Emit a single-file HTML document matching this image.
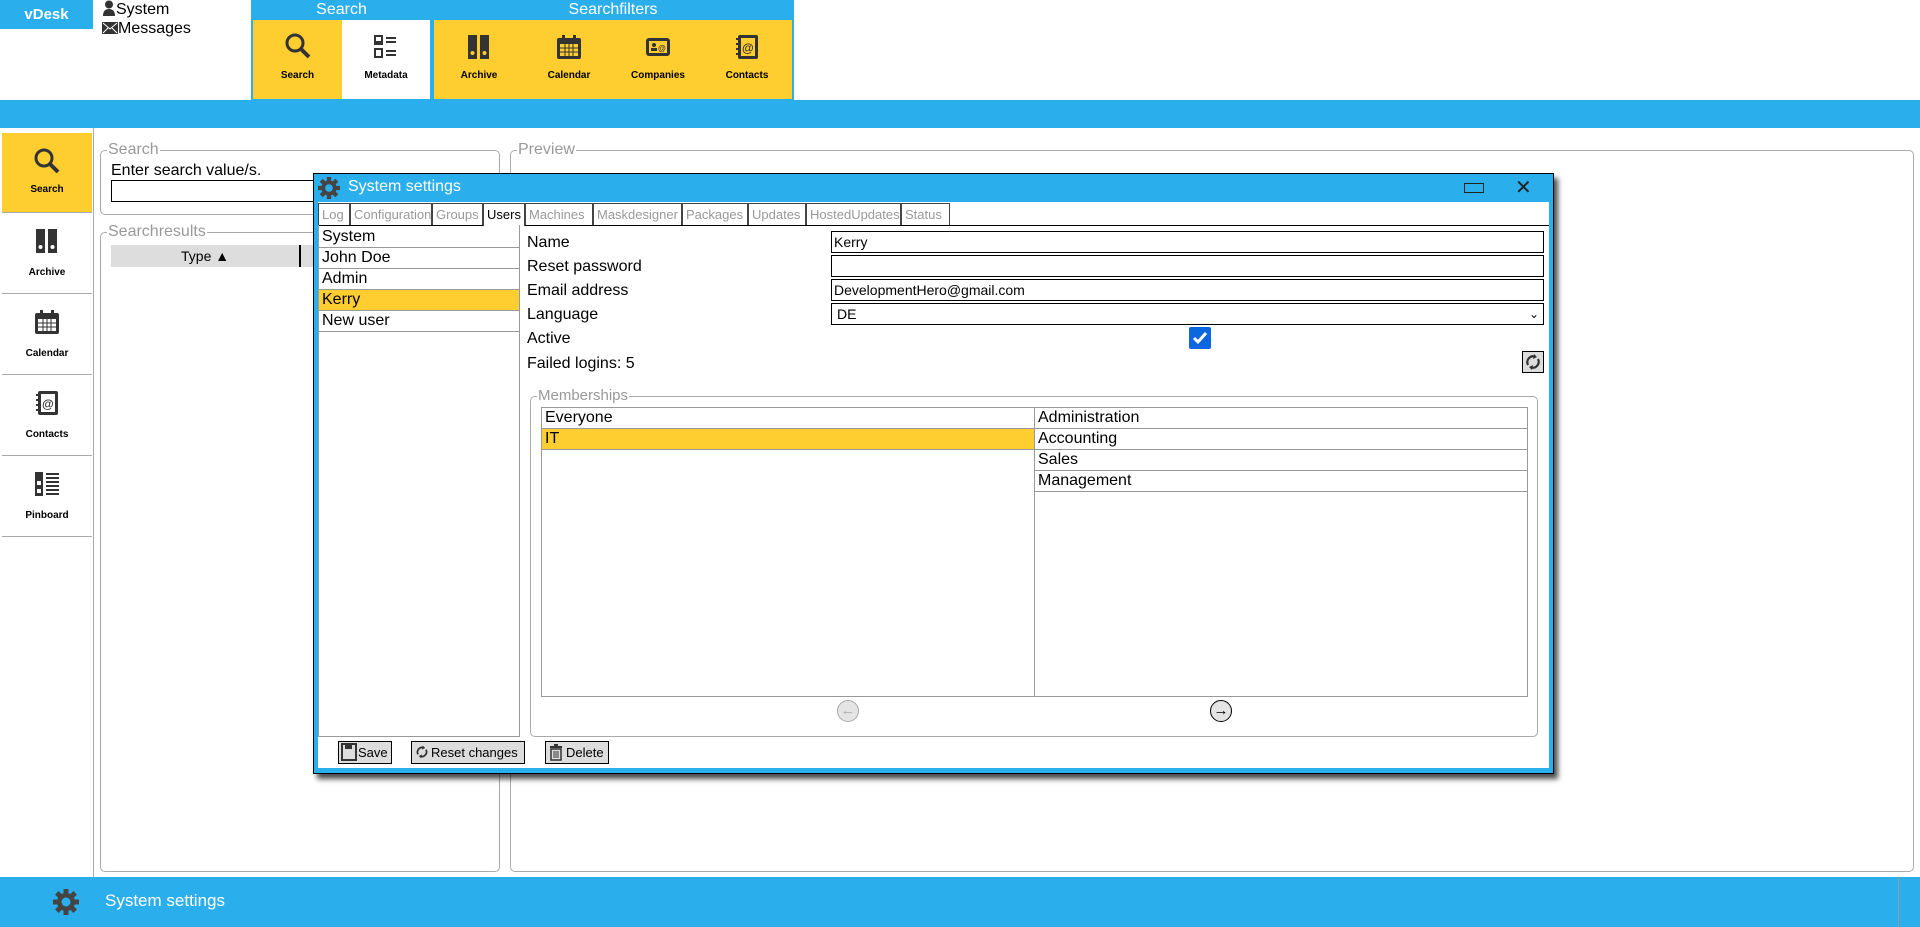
<!DOCTYPE html>
<html><head><meta charset="utf-8"><style>
*{box-sizing:border-box;margin:0;padding:0}
body{width:1920px;height:927px;overflow:hidden;background:#fff;font-family:"Liberation Sans",sans-serif;position:relative;color:#000}
.a{position:absolute}
.blue{background:#2bafec}
.yel{background:#fecd30}
.tile{position:absolute;text-align:center;font-size:10px;font-weight:bold}
.tile svg{display:block;margin:0 auto}
.fs{position:absolute;border:1px solid #aaa;border-radius:5px}
.lg{position:absolute;top:-10px;left:6px;background:#fff;color:#999;font-size:16px;padding:0 1px;line-height:18px}
.side{position:absolute;left:2px;width:90px;height:80px;text-align:center;font-size:10px;font-weight:bold;border-bottom:1px solid #aaa}
.tab{position:absolute;top:203px;height:22px;border:1px solid #444;border-bottom:none;font-size:13px;color:#999;line-height:21px;padding-left:3px}
.ul div{height:21px;border-bottom:1px solid #999;font-size:16px;line-height:20px;padding-left:3px}
.lbl{position:absolute;left:527px;font-size:16px}
.inp{position:absolute;left:831px;width:713px;height:22px;border:1px solid #000;font-size:14px;line-height:20px;padding-left:2px}
.btn{position:absolute;top:741px;height:23px;border:1px solid #000;background:#ddd;font-size:13px;line-height:21px}
</style></head><body>
<!-- top -->
<div class="a blue" style="left:0;top:0;width:93px;height:29px;color:#fff;font-weight:bold;font-size:15px;text-align:center;line-height:29px">vDesk</div>
<div class="a" style="left:102px;top:0;font-size:16px;line-height:19px">
<div><svg width="14" height="16" viewBox="0 0 14 16" style="vertical-align:-2px"><circle cx="7" cy="4.5" r="4" fill="#333"/><path d="M1 16 Q1 9 7 9 Q13 9 13 16Z" fill="#333"/></svg>System</div>
<div><svg width="16" height="12" viewBox="0 0 16 12" style="vertical-align:-1px"><rect width="16" height="12" fill="#333"/><path d="M1 1 L8 7 L15 1 M1 11 L6 6 M15 11 L10 6" stroke="#fff" fill="none"/></svg>Messages</div></div>
<div class="a blue" style="left:251px;top:0;width:181px;height:100px"></div>
<div class="a" style="left:251px;top:0;width:181px;height:20px;color:#fff;font-size:16px;text-align:center;line-height:19px">Search</div>
<div class="a yel" style="left:253px;top:20px;width:89px;height:79px"></div>
<div class="a" style="left:342px;top:20px;width:88px;height:79px;background:#fff"></div>
<div class="a blue" style="left:432px;top:0;width:362px;height:100px"></div>
<div class="a" style="left:432px;top:0;width:362px;height:20px;color:#fff;font-size:16px;text-align:center;line-height:19px">Searchfilters</div>
<div class="a yel" style="left:434px;top:20px;width:358px;height:79px"></div>
<div class="tile" style="left:253px;top:32px;width:89px"><svg width="28" height="28" viewBox="0 0 28 28"><circle cx="11" cy="11" r="8" stroke="#333" stroke-width="3" fill="none"/><path d="M17 17 L25 25" stroke="#333" stroke-width="4"/></svg><div style="margin-top:10px">Search</div></div>
<div class="tile" style="left:342px;top:34px;width:88px"><svg width="26" height="26" viewBox="0 0 26 26"><rect x="1" y="1" width="9" height="10" fill="#333"/><rect x="1" y="14" width="9" height="10" fill="#333"/><rect x="3" y="3" width="5" height="4" fill="#fff"/><rect x="3" y="16" width="5" height="6" fill="#fff"/><path d="M13 4h10M13 8h10M13 17h10M13 21h10" stroke="#333" stroke-width="2"/></svg><div style="margin-top:10px">Metadata</div></div>
<div class="tile" style="left:434px;top:34px;width:90px"><svg width="24" height="26" viewBox="0 0 24 26"><rect x="1" y="1" width="9" height="24" fill="#333"/><rect x="13" y="1" width="9" height="24" fill="#333"/><circle cx="5.5" cy="19" r="2" fill="#fecd30"/><circle cx="17.5" cy="19" r="2" fill="#fecd30"/></svg><div style="margin-top:10px">Archive</div></div>
<div class="tile" style="left:524px;top:34px;width:90px"><svg width="26" height="26" viewBox="0 0 26 26"><rect x="1" y="4" width="24" height="21" rx="2" fill="#333"/><rect x="4" y="10" width="18" height="12" fill="#fecd30"/><path d="M4 14h18M4 18h18M9 10v12M13 10v12M17 10v12" stroke="#333"/><rect x="6" y="1" width="3" height="6" fill="#333"/><rect x="17" y="1" width="3" height="6" fill="#333"/></svg><div style="margin-top:10px">Calendar</div></div>
<div class="tile" style="left:614px;top:34px;width:88px"><svg width="26" height="26" viewBox="0 0 26 26"><rect x="1" y="4" width="24" height="18" rx="3" fill="#333"/><rect x="4" y="7" width="18" height="12" fill="#fecd30"/><circle cx="9" cy="11" r="2" fill="#333"/><rect x="6" y="14" width="6" height="3" fill="#333"/><text x="13" y="17" font-size="8" font-family="Liberation Sans" fill="#333" font-weight="bold">@</text></svg><div style="margin-top:10px">Companies</div></div>
<div class="tile" style="left:702px;top:34px;width:90px"><svg width="26" height="26" viewBox="0 0 26 26"><rect x="4" y="1" width="20" height="24" rx="2" fill="#333"/><rect x="7" y="4" width="14" height="18" fill="#fecd30"/><text x="8" y="18" font-size="12" font-family="Liberation Sans" fill="#333" font-weight="bold">@</text><path d="M2 5h4M2 10h4M2 15h4M2 20h4" stroke="#333" stroke-width="2"/></svg><div style="margin-top:10px">Contacts</div></div>
<div class="a blue" style="left:0;top:100px;width:1920px;height:28px"></div>
<!-- sidebar -->
<div class="a" style="left:93px;top:128px;width:1px;height:749px;background:#aaa"></div>
<div class="side yel" style="top:133px;height:80px;padding-top:14px"><svg width="28" height="28" viewBox="0 0 28 28"><circle cx="11" cy="11" r="8" stroke="#333" stroke-width="3" fill="none"/><path d="M17 17 L25 25" stroke="#333" stroke-width="4"/></svg><div style="margin-top:6px">Search</div></div>
<div class="side" style="top:214px;padding-top:14px"><svg width="24" height="26" viewBox="0 0 24 26"><rect x="1" y="1" width="9" height="24" fill="#333"/><rect x="13" y="1" width="9" height="24" fill="#333"/><circle cx="5.5" cy="19" r="2" fill="#fff"/><circle cx="17.5" cy="19" r="2" fill="#fff"/></svg><div style="margin-top:10px">Archive</div></div>
<div class="side" style="top:295px;padding-top:14px"><svg width="26" height="26" viewBox="0 0 26 26"><rect x="1" y="4" width="24" height="21" rx="2" fill="#333"/><rect x="4" y="10" width="18" height="12" fill="#fff"/><path d="M4 14h18M4 18h18M9 10v12M13 10v12M17 10v12" stroke="#333"/><rect x="6" y="1" width="3" height="6" fill="#333"/><rect x="17" y="1" width="3" height="6" fill="#333"/></svg><div style="margin-top:10px">Calendar</div></div>
<div class="side" style="top:376px;padding-top:14px"><svg width="26" height="26" viewBox="0 0 26 26"><rect x="4" y="1" width="20" height="24" rx="2" fill="#333"/><rect x="7" y="4" width="14" height="18" fill="#fff"/><text x="8" y="18" font-size="12" font-family="Liberation Sans" fill="#333" font-weight="bold">@</text><path d="M2 5h4M2 10h4M2 15h4M2 20h4" stroke="#333" stroke-width="2"/></svg><div style="margin-top:10px">Contacts</div></div>
<div class="side" style="top:457px;padding-top:14px"><svg width="26" height="26" viewBox="0 0 26 26"><rect x="1" y="1" width="8" height="24" fill="#333"/><rect x="3" y="10" width="4" height="4" fill="#fff"/><rect x="3" y="18" width="4" height="4" fill="#fff"/><path d="M12 3h13M12 7h13M12 11h13M12 15h13M12 19h13M12 23h13" stroke="#333" stroke-width="2"/></svg><div style="margin-top:10px">Pinboard</div></div>
<!-- fieldsets -->
<div class="fs" style="left:100px;top:150px;width:400px;height:65px"><div class="lg">Search</div>
<div class="a" style="left:10px;top:11px;font-size:16px">Enter search value/s.</div>
<div class="a" style="left:10px;top:29px;width:400px;height:22px;border:1px solid #000"></div></div>
<div class="fs" style="left:100px;top:232px;width:400px;height:640px"><div class="lg">Searchresults</div>
<div class="a" style="left:10px;top:12px;width:400px;height:22px;background:#ddd;font-size:14px;line-height:22px;padding-left:70px">Type ▲</div>
<div class="a" style="left:198px;top:12px;width:2px;height:22px;background:#000"></div></div>
<div class="fs" style="left:510px;top:150px;width:1404px;height:722px"><div class="lg">Preview</div></div>
<!-- footer -->
<div class="a blue" style="left:0;top:877px;width:1920px;height:50px"></div>
<div class="a" style="left:1898px;top:877px;width:1px;height:50px;background:#999"></div>
<svg class="a" style="left:53px;top:889px" width="26" height="26" viewBox="0 0 26 26"><g fill="#444"><circle cx="13" cy="13" r="9"/><rect x="10.5" y="0" width="5" height="26"/><rect x="0" y="10.5" width="26" height="5"/><rect x="10.5" y="0" width="5" height="26" transform="rotate(45 13 13)"/><rect x="10.5" y="0" width="5" height="26" transform="rotate(-45 13 13)"/></g><circle cx="13" cy="13" r="4.5" fill="#2bafec"/></svg>
<div class="a" style="left:105px;top:891px;color:#fff;font-size:17px">System settings</div>
<!-- dialog -->
<div class="a" style="left:313px;top:173px;width:1241px;height:601px;background:#2bafec;border:1px solid #000;box-shadow:4px 5px 5px rgba(0,0,0,.7)"></div>
<svg class="a" style="left:318px;top:177px" width="22" height="22" viewBox="0 0 26 26"><g fill="#444"><circle cx="13" cy="13" r="9"/><rect x="10.5" y="0" width="5" height="26"/><rect x="0" y="10.5" width="26" height="5"/><rect x="10.5" y="0" width="5" height="26" transform="rotate(45 13 13)"/><rect x="10.5" y="0" width="5" height="26" transform="rotate(-45 13 13)"/></g><circle cx="13" cy="13" r="4.5" fill="#2bafec"/></svg>
<div class="a" style="left:348px;top:178px;color:#fff;font-size:16px">System settings</div>
<div class="a" style="left:1464px;top:183px;width:20px;height:10px;border:1px solid #222"></div>
<div class="a" style="left:1515px;top:175px;font-size:20px;color:#222">✕</div>
<div class="a" style="left:318px;top:202px;width:1231px;height:566px;background:#fff"></div>
<div class="a" style="left:318px;top:225px;width:1231px;height:1px;background:#000"></div>
<div class="tab" style="left:318px;width:32px">Log</div>
<div class="tab" style="left:350px;width:82px">Configuration</div>
<div class="tab" style="left:432px;width:51px">Groups</div>
<div class="tab" style="left:483px;width:42px;color:#000;height:23px;background:#fff">Users</div>
<div class="tab" style="left:525px;width:68px">Machines</div>
<div class="tab" style="left:593px;width:89px">Maskdesigner</div>
<div class="tab" style="left:682px;width:66px">Packages</div>
<div class="tab" style="left:748px;width:58px">Updates</div>
<div class="tab" style="left:806px;width:95px">HostedUpdates</div>
<div class="tab" style="left:901px;width:49px">Status</div>
<div class="a ul" style="left:318px;top:225px;width:202px;height:512px;border:1px solid #999;border-top:none;padding-top:2px">
<div>System</div><div>John Doe</div><div>Admin</div><div class="yel">Kerry</div><div>New user</div></div>
<div class="lbl" style="top:234px">Name</div>
<div class="lbl" style="top:258px">Reset password</div>
<div class="lbl" style="top:282px">Email address</div>
<div class="lbl" style="top:306px">Language</div>
<div class="lbl" style="top:330px">Active</div>
<div class="lbl" style="top:355px">Failed logins: 5</div>
<div class="inp" style="top:231px">Kerry</div>
<div class="inp" style="top:255px"></div>
<div class="inp" style="top:279px">DevelopmentHero@gmail.com</div>
<div class="inp" style="top:303px;padding-left:5px">DE<span style="position:absolute;right:4px;top:0;font-size:12px">⌄</span></div>
<div class="a" style="left:1189px;top:327px;width:22px;height:22px;background:#0b67dd;border-radius:2px"><svg width="22" height="22"><path d="M5 11 L9 15 L17 6" stroke="#fff" stroke-width="3" fill="none"/></svg></div>
<div class="a" style="left:1522px;top:351px;width:22px;height:22px;border:1px solid #000;background:#ddd"><svg width="20" height="20" viewBox="0 0 20 20"><path d="M5 13 A6 6 0 0 1 12 4.5 M15 7 A6 6 0 0 1 8 15.5" stroke="#333" stroke-width="2.2" fill="none"/><path d="M11 2 L14 5 L10 7Z M9 18 L6 15 L10 13Z" fill="#333"/></svg></div>
<div class="fs" style="left:530px;top:396px;width:1008px;height:341px"><div class="lg" style="font-size:15px">Memberships</div></div>
<div class="a ul" style="left:541px;top:407px;width:494px;height:290px;border:1px solid #999"><div>Everyone</div><div class="yel">IT</div></div>
<div class="a ul" style="left:1034px;top:407px;width:494px;height:290px;border:1px solid #999"><div>Administration</div><div>Accounting</div><div>Sales</div><div>Management</div></div>
<div class="a" style="left:837px;top:700px;width:22px;height:22px;border-radius:50%;border:1px solid #aaa;background:#e4e4e4;color:#aaa;font-size:15px;text-align:center;line-height:20px">←</div>
<div class="a" style="left:1210px;top:700px;width:22px;height:22px;border-radius:50%;border:1px solid #000;background:#e4e4e4;color:#000;font-size:15px;font-weight:bold;text-align:center;line-height:20px">→</div>
<div class="btn" style="left:338px;width:54px"><svg width="16" height="18" viewBox="0 0 16 18" style="vertical-align:-4px;margin:0 1px 0 2px"><rect x="1" y="1" width="14" height="16" fill="none" stroke="#333" stroke-width="2"/><rect x="4" y="1" width="7" height="5" fill="#333"/></svg>Save</div>
<div class="btn" style="left:411px;width:114px"><svg width="16" height="18" viewBox="0 0 20 20" style="vertical-align:-4px;margin:0 1px 0 2px"><path d="M5 13 A6 6 0 0 1 12 4.5 M15 7 A6 6 0 0 1 8 15.5" stroke="#333" stroke-width="2.2" fill="none"/><path d="M11 2 L14 5 L10 7Z M9 18 L6 15 L10 13Z" fill="#333"/></svg>Reset changes</div>
<div class="btn" style="left:545px;width:64px"><svg width="16" height="18" viewBox="0 0 16 18" style="vertical-align:-4px;margin:0 2px 0 2px"><rect x="2" y="3" width="12" height="2" fill="#333"/><rect x="6" y="1" width="4" height="2" fill="#333"/><rect x="3" y="6" width="10" height="11" fill="none" stroke="#333" stroke-width="1.5"/><path d="M6 8v7M8 8v7M10 8v7" stroke="#333"/></svg>Delete</div>
</body></html>
